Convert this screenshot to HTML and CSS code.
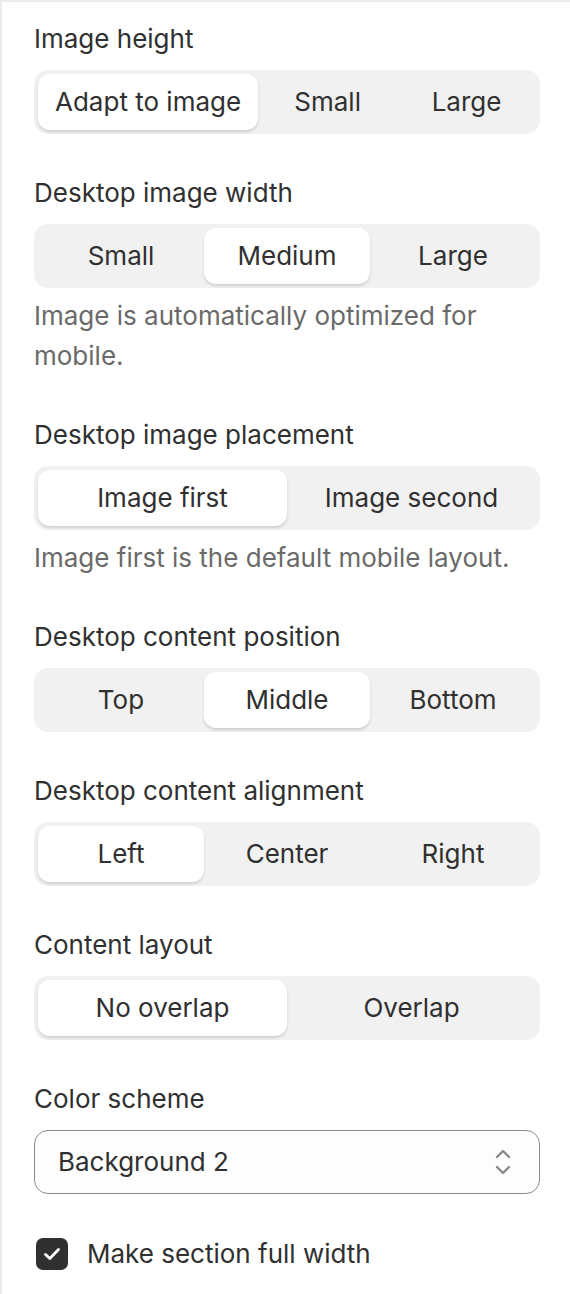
FILE: index.html
```html
<!DOCTYPE html>
<html lang="en">
<head>
    <meta charset="UTF-8">
    <meta name="viewport" content="width=device-width, initial-scale=1.0">
    <title>Section settings</title>
    <link rel="stylesheet" href="styles.css">
</head>
<body>
    <main class="panel">
        <div class="field">
            <div class="label">Image height</div>
            <div class="seg">
                <button class="opt on">Adapt to image</button>
                <button class="opt">Small</button>
                <button class="opt">Large</button>
            </div>
        </div>

        <div class="field">
            <div class="label">Desktop image width</div>
            <div class="seg">
                <button class="opt">Small</button>
                <button class="opt on">Medium</button>
                <button class="opt">Large</button>
            </div>
            <p class="help">Image is automatically optimized for mobile.</p>
        </div>

        <div class="field">
            <div class="label">Desktop image placement</div>
            <div class="seg">
                <button class="opt on">Image first</button>
                <button class="opt">Image second</button>
            </div>
            <p class="help">Image first is the default mobile layout.</p>
        </div>

        <div class="field">
            <div class="label">Desktop content position</div>
            <div class="seg">
                <button class="opt">Top</button>
                <button class="opt on">Middle</button>
                <button class="opt">Bottom</button>
            </div>
        </div>

        <div class="field">
            <div class="label">Desktop content alignment</div>
            <div class="seg">
                <button class="opt on">Left</button>
                <button class="opt">Center</button>
                <button class="opt">Right</button>
            </div>
        </div>

        <div class="field">
            <div class="label">Content layout</div>
            <div class="seg">
                <button class="opt on">No overlap</button>
                <button class="opt">Overlap</button>
            </div>
        </div>

        <div class="field">
            <div class="label">Color scheme</div>
            <div class="select">
                <span>Background 2</span>
                <svg width="20" height="30" viewBox="0 0 20 30" fill="none" stroke="#8a8a8a" stroke-width="2.4" stroke-linecap="round" stroke-linejoin="round">
                    <path d="M4 10 L10 4 L16 10"/>
                    <path d="M4 20 L10 26 L16 20"/>
                </svg>
            </div>
        </div>

        <label class="check">
            <span class="box">
                <svg width="20" height="20" viewBox="0 0 20 20" fill="none" stroke="#fff" stroke-width="2.8" stroke-linecap="round" stroke-linejoin="round">
                    <path d="M3.5 10.5 L7.8 14.5 L16.5 5.5"/>
                </svg>
            </span>
            Make section full width
        </label>
    </main>
</body>
</html>
```

FILE: styles.css
```css
* {
    margin: 0;
    padding: 0;
    box-sizing: border-box;
}

body {
    background: #fff;
    font-family: Inter, "Noto Sans", sans-serif;
    font-size: 26px;
    line-height: 40px;
    color: #303030;
}

.panel {
    min-height: 1294px;
    border-top: 2px solid #ebebeb;
    border-left: 2px solid #ebebeb;
    padding: 17px 30px 0 32px;
}

.field {
    margin-bottom: 39px;
}

.label {
    margin-bottom: 11px;
}

.seg {
    display: flex;
    background: #f1f1f1;
    border-radius: 14px;
    padding: 4px;
    height: 64px;
}

.opt {
    flex: 1;
    white-space: nowrap;
    padding: 0 17px;
    border: none;
    background: none;
    font: inherit;
    color: #303030;
    border-radius: 12px;
    cursor: pointer;
}

.opt.on {
    background: #fff;
    box-shadow: 0 2px 3px rgba(0, 0, 0, 0.14);
}

.help {
    margin-top: 8px;
    color: #6a6a6a;
}

.select {
    display: flex;
    align-items: center;
    justify-content: space-between;
    height: 64px;
    padding: 0 26px 0 23px;
    border: 1.5px solid #8a8a8a;
    border-radius: 14px;
    background: #fdfdfd;
}

.check {
    display: flex;
    align-items: center;
    gap: 19px;
    padding: 1px 0 0 2px;
}

.box {
    width: 32px;
    height: 32px;
    border-radius: 7px;
    background: #303030;
    display: flex;
    align-items: center;
    justify-content: center;
}
```
